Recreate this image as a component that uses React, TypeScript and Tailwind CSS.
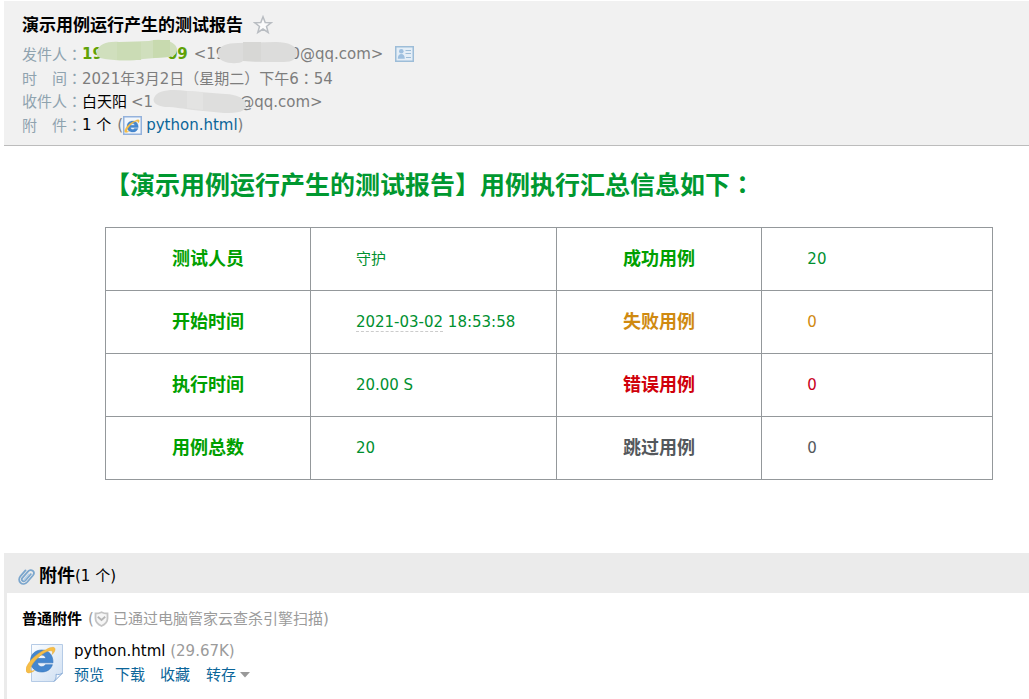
import { type ReactNode } from "react";

type Row = {
  label: string;
  value: ReactNode;
  status: string;
  count: number;
  statusClass: string;
  countClass: string;
};

const rows: Row[] = [
  {
    label: "测试人员",
    value: "守护",
    status: "成功用例",
    count: 20,
    statusClass: "text-[#00a000]",
    countClass: "text-[#009030]",
  },
  {
    label: "开始时间",
    value: (
      <>
        <span className="border-b border-dashed border-[#cccccc]">2021-03-02</span> 18:53:58
      </>
    ),
    status: "失败用例",
    count: 0,
    statusClass: "text-[#d08a10]",
    countClass: "text-[#d08a10]",
  },
  {
    label: "执行时间",
    value: "20.00 S",
    status: "错误用例",
    count: 0,
    statusClass: "text-[#d0000a]",
    countClass: "text-[#c8001c]",
  },
  {
    label: "用例总数",
    value: "20",
    status: "跳过用例",
    count: 0,
    statusClass: "text-[#54585c]",
    countClass: "text-[#54585c]",
  },
];

// the Traditional Chinese form of the colon is centred in its box
function Colon() {
  return (
    <span lang="zh-TW" className="font-['Noto_Sans_CJK_TC',sans-serif]">
      ：
    </span>
  );
}

function Star() {
  return (
    <svg width="20" height="20" viewBox="0 0 20 20" fill="none">
      <path
        d="M10 1.8l2.2 5.7 6.1.2-4.8 3.8 1.7 5.9-5.2-3.4-5.2 3.4 1.7-5.9L1.7 7.7l6.1-.2z"
        fill="#fbfbfb"
        stroke="#b9bdc2"
        strokeWidth="1.5"
      />
    </svg>
  );
}

function ContactCard() {
  return (
    <svg width="19" height="16" viewBox="0 0 19 16">
      <rect x=".75" y=".75" width="17.5" height="14.5" fill="#e4eef7" stroke="#9dbdd8" strokeWidth="1.5" />
      <circle cx="6.3" cy="5.2" r="2.3" fill="#9dbfdf" />
      <path d="M2.800 12.800c0-3.200 1.400-4.800 3.500-4.800s3.500 1.600 3.500 4.800z" fill="#9dbfdf" />
      <path d="M10.500 4.500h5.500M10.500 7.500h5.500M11 11.500h5" stroke="#9dbdd8" strokeWidth="1.2" />
    </svg>
  );
}

function IeGlyph() {
  return (
    <>
      <path
        fillRule="evenodd"
        d="M28.500 21.300H13c.3 2.400 1.900 3.900 4.200 3.900 1.700 0 2.900-.7 3.700-2h7c-1.600 4.700-5.400 7.300-10.700 7.300C10.600 30.500 6 26.100 6 19.500S10.600 8.500 17.200 8.500c7 0 11.500 4.900 11.300 12.800zM13.100 17h8.300c-.4-2.200-1.900-3.500-4.200-3.500S13.400 14.800 13.100 17z"
        fill="#4587cf"
        stroke="#3473b9"
        strokeWidth=".6"
      />
      <path
        d="M21.500 8.200c4.500-2.700 8-3 8.800-1.400.8 1.600-.4 4-2.700 6.200.8-2.100.6-3.300-.6-3.700-3-1-9.500 2.700-14.600 8C7.300 22.600 5 27.300 6.300 28.900c.6.700 1.900.7 3.700.100-3.200 2.300-6.300 3.100-7.700 1.700-2.400-2.600.7-8.800 6.500-14.400 4.300-4.100 8.900-7.100 12.700-8.100z"
        fill="#f6be48"
        stroke="#e8ab35"
        strokeWidth=".5"
      />
    </>
  );
}

function HtmlFileSmall() {
  return (
    <svg width="19" height="19" viewBox="0 0 19 19">
      <rect x=".75" y=".75" width="17.5" height="17.5" fill="#f1f6fc" stroke="#94b2dc" strokeWidth="1.5" />
      <g transform="translate(1 .8) scale(.5)">
        <IeGlyph />
      </g>
    </svg>
  );
}

function HtmlFileLarge() {
  return (
    <svg width="38" height="40" viewBox="0 0 38 40">
      <defs>
        <linearGradient id="sheet" x1="0" y1="0" x2="1" y2="1">
          <stop offset="0" stopColor="#fbfdff" />
          <stop offset="1" stopColor="#cfdff2" />
        </linearGradient>
      </defs>
      <path d="M5.500 1.500h31V30l-8.500 8.500H5.500z" fill="url(#sheet)" stroke="#b5cbe6" />
      <path d="M36.500 30c-2 1.600-4.500 1.800-6.500 1.300.5 2.600-.2 5.200-2 7.200z" fill="#f6faff" stroke="#8fb0d9" />
      <g transform="translate(-1.500 -1.500)">
        <IeGlyph />
      </g>
    </svg>
  );
}

function Clip() {
  return (
    <svg width="17" height="18" viewBox="0 0 17 18" fill="none" strokeLinecap="round">
      <path
        d="M12.800 7.200l-5.400 6.300c-.9 1-2.300 1-3.100.2-.8-.8-.7-1.900.1-2.800l5.700-6.500c1.400-1.600 3.400-1.800 4.700-.6 1.400 1.200 1.400 3.100.1 4.700l-5.600 6.500c-1.900 2.100-4.900 2.400-6.700.8-1.900-1.700-1.900-4.500-.1-6.600l5-5.800"
        stroke="#7ba6cd"
        strokeWidth="1.800"
      />
      <path d="M11 7.200l-4.700 5.400" stroke="#b4cee6" strokeWidth="1.500" />
    </svg>
  );
}

function Shield() {
  return (
    <svg width="15" height="16" viewBox="0 0 15 16" fill="none">
      <path
        d="M7.500 1.200c2 1 4 1.300 6 1.300v5c0 3.500-2.300 5.800-6 7.500-3.700-1.700-6-4-6-7.500v-5c2 0 4-.3 6-1.300z"
        fill="#f6f6f6"
        stroke="#c4c4c4"
        strokeWidth="1.800"
      />
      <path d="M3.800 5.800L7.500 9l3.700-3.200" stroke="#b5b5b5" strokeWidth="1.800" />
    </svg>
  );
}

const linkClass = "text-[#0b6599]";
const labelClass = "w-[60px] shrink-0 text-[#8fa3af]";

export default function App() {
  return (
    <div
      lang="zh-CN"
      className="bg-white pt-px pl-1 font-['DejaVu_Sans','Noto_Sans_CJK_SC',sans-serif] text-[15px] leading-6 text-black"
    >
      <header className="border-b border-[#bcbcbc] bg-[#f1f1f1] pt-3 pb-2 pl-[18px]">
        <div className="flex h-[29px] items-start">
          <h1 className="w-[231px] text-[17px] leading-6 font-bold whitespace-nowrap">
            演示用例运行产生的测试报告
          </h1>
          <button type="button" aria-label="星标" className="pt-0.5">
            <Star />
          </button>
        </div>

        <div className="flex h-6 items-center whitespace-nowrap">
          <span className={labelClass}>
            发件人
            <Colon />
          </span>
          <span className="flex font-bold text-[#5fa207]">
            19
            <span className="relative w-[64px]">
              <svg className="absolute -top-1 -left-2" width="84" height="24" viewBox="0 0 84 24">
                <path d="M2 13C4 6 13 3 24 4l30-1c12-3 27 0 28 8 0 6-4 8-10 8l-24 2c-14 3-30 1-38 0-7-1-10-4-8-8z" fill="#d0dfbd" />
                <path d="M22 4h24v18H22z" fill="#cbdcb5" />
                <path d="M58 2h17v17l-17 1z" fill="#c8daaf" />
              </svg>
            </span>
            09
          </span>
          <span className="ml-1.5 flex text-[#7d7d7d]">
            &lt;19
            <span className="relative w-[65px]">
              <svg className="absolute -top-0.5 -left-2" width="81" height="24" viewBox="0 0 81 24">
                <path d="M1 12C2 6 10 3 21 3l38-1c12 0 21 4 21 10 0 7-5 10-13 10H38l-12-1c-3 3-14 3-20 0-4-2-6-5-5-9z" fill="#dcdcdb" />
                <path d="M26 2h18v19H26z" fill="#d7d7d5" />
              </svg>
            </span>
            0@qq.com&gt;
          </span>
          <button type="button" aria-label="联系人名片" className="ml-3">
            <ContactCard />
          </button>
        </div>

        <div className="flex h-6 items-center whitespace-nowrap">
          <span className={labelClass}>
            时　间
            <Colon />
          </span>
          <span className="text-[#7d7d7d]">
            2021年3月2日（星期二）下午6
            <Colon />
            54
          </span>
        </div>

        <div className="flex h-[23px] items-center whitespace-nowrap">
          <span className={labelClass}>
            收件人
            <Colon />
          </span>
          <span>白天阳</span>
          <span className="ml-1 flex text-[#7d7d7d]">
            &lt;1
            <span className="relative w-[86px]">
              <svg className="absolute -top-0.5 left-0" width="94" height="26" viewBox="0 0 94 26">
                <path d="M1 10C4 2 18 1 34 3l38 3c12 0 21 5 21 11 0 7-8 8-22 8l-31-3c-10-1-16-3-28-3C4 18-1 15 1 10z" fill="#dededd" />
                <path d="M34 3l16 1v18l-16-2z" fill="#e3e3e2" />
              </svg>
            </span>
            @qq.com&gt;
          </span>
        </div>

        <div className="flex h-6 items-center whitespace-nowrap">
          <span className={labelClass}>
            附　件
            <Colon />
          </span>
          <span>1 个</span>
          <span className="ml-1.5 text-[#7d7d7d]">(</span>
          <HtmlFileSmall />
          <a href="#attachments" className={`ml-1 ${linkClass}`}>
            python.html
          </a>
          <span className="text-[#7d7d7d]">)</span>
        </div>
      </header>

      <main className="pt-[18px] pr-9 pb-[73px] pl-[101px]">
        <h2 className="mb-[22px] text-[25px] leading-[38px] font-bold whitespace-nowrap text-[#009830]">
          【演示用例运行产生的测试报告】用例执行汇总信息如下
          <Colon />
        </h2>
        <table className="w-full table-fixed border-collapse text-left">
          <colgroup>
            <col className="w-[23.1%]" />
            <col className="w-[27.7%]" />
            <col className="w-[23.2%]" />
            <col className="w-[26%]" />
          </colgroup>
          <tbody>
            {rows.map((r) => (
              <tr key={r.label} className="h-[63px]">
                <th className="border border-[#94989b] text-center text-[18px] font-bold text-[#00a000]">
                  {r.label}
                </th>
                <td className="border border-[#94989b] pl-[45px] text-[#009030]">{r.value}</td>
                <th className={`border border-[#94989b] text-center text-[18px] font-bold ${r.statusClass}`}>
                  {r.status}
                </th>
                <td className={`border border-[#94989b] pl-[45px] ${r.countClass}`}>{r.count}</td>
              </tr>
            ))}
          </tbody>
        </table>
      </main>

      <section id="attachments">
        <div className="flex h-10 items-center bg-[#ebebeb] pt-1.5 pl-3.5">
          <Clip />
          <h3 className="ml-1 text-[18px] font-bold">附件</h3>
          <span>(1 个)</span>
        </div>
        <div className="border-l-[3px] border-[#ebebeb] pt-3.5 pb-3 pl-[15px]">
          <div className="flex items-center whitespace-nowrap">
            <strong>普通附件</strong>
            <span className="ml-1.5 flex items-center text-[#9b9b9b]">
              (<Shield />
              <span className="ml-1">已通过电脑管家云查杀引擎扫描)</span>
            </span>
          </div>
          <div className="mt-2 flex gap-2.5 pl-1">
            <div className="pt-1">
              <HtmlFileLarge />
            </div>
            <div>
              <p>
                python.html <span className="text-[#9b9b9b]">(29.67K)</span>
              </p>
              <div className="flex items-center">
                <a href="#preview" className={linkClass}>预览</a>
                <a href="#download" className={`ml-[11px] ${linkClass}`}>下载</a>
                <a href="#favorite" className={`ml-[15px] ${linkClass}`}>收藏</a>
                <button type="button" className={`ml-4 flex items-center gap-1 ${linkClass}`}>
                  转存
                  <svg width="10" height="6" viewBox="0 0 10 6">
                    <path d="M0 0h10L5 5.500z" fill="#999999" />
                  </svg>
                </button>
              </div>
            </div>
          </div>
        </div>
      </section>
    </div>
  );
}
